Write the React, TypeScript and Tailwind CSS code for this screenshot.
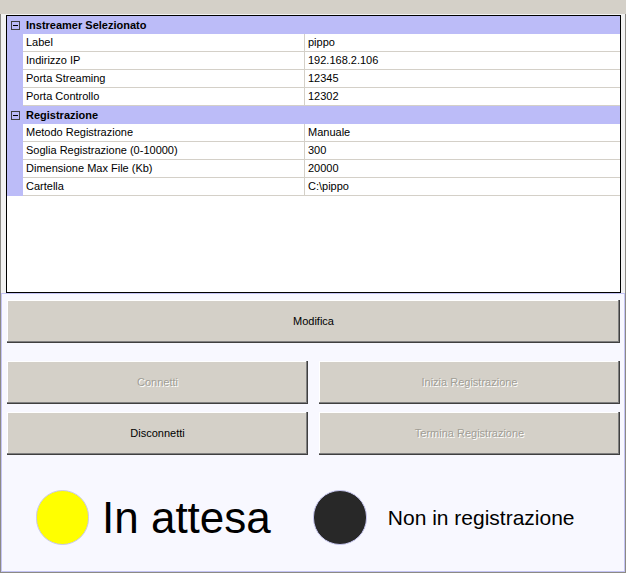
import React from "react";

const cats: { title: string; rows: [string, string][] }[] = [
  {
    title: "Instreamer Selezionato",
    rows: [
      ["Label", "pippo"],
      ["Indirizzo IP", "192.168.2.106"],
      ["Porta Streaming", "12345"],
      ["Porta Controllo", "12302"],
    ],
  },
  {
    title: "Registrazione",
    rows: [
      ["Metodo Registrazione", "Manuale"],
      ["Soglia Registrazione (0-10000)", "300"],
      ["Dimensione Max File (Kb)", "20000"],
      ["Cartella", "C:\\pippo"],
    ],
  },
];

function Minus() {
  return (
    <div className="w-[9px] h-[9px] border border-[#404040] bg-transparent flex items-center justify-center">
      <div className="w-[5px] h-px bg-black" />
    </div>
  );
}

function Btn({ label, disabled, className }: { label: string; disabled?: boolean; className?: string }) {
  return (
    <div
      className={
        "h-[43px] bg-[#d4d0c8] flex items-center justify-center text-[11px] shadow-[inset_-1px_-1px_0_#404040,inset_-2px_-2px_0_#808080,inset_1px_1px_0_#ffffff] " +
        (disabled ? "text-[#a19e96] [text-shadow:1px_1px_0_#ffffff] " : "text-black ") +
        (className ?? "")
      }
    >
      {label}
    </div>
  );
}

export default function App() {
  return (
    <div className="w-[626px] h-[573px] bg-[#d4d0c8] flex flex-col font-['Liberation_Sans',Arial,sans-serif]">
      <div className="h-[14px] shrink-0" />
      <div className="flex-1 flex flex-col border-l border-r border-b border-[#8c8a85]">
        <div className="h-[279px] bg-[#f2f2f2] pl-[5px] pr-[4px] pt-px">
          <div className="h-[278px] border border-black bg-white flex flex-col">
            {cats.map((c) => (
              <div key={c.title} className="flex flex-col">
                <div className="h-[18px] bg-[#bcbcf8] flex items-center">
                  <div className="w-[16px] flex justify-center pl-px">
                    <Minus />
                  </div>
                  <div className="pl-[3px] text-[11px] font-bold text-black leading-none">{c.title}</div>
                </div>
                {c.rows.map(([k, v]) => (
                  <div key={k} className="h-[18px] flex">
                    <div className="w-[16px] bg-[#bcbcf8] shrink-0" />
                    <div className="w-[282px] shrink-0 border-b border-r border-[#d4d0c8] pl-[3px] flex items-center text-[11px] text-black">
                      {k}
                    </div>
                    <div className="flex-1 border-b border-[#d4d0c8] pl-[3px] flex items-center text-[11px] text-black">
                      {v}
                    </div>
                  </div>
                ))}
              </div>
            ))}
          </div>
        </div>
        <div className="flex-1 border border-[#c4c4f4] bg-[#f8f8ff] pl-[5px] pr-[4px] pt-[6px] flex flex-col">
          <Btn label="Modifica" />
          <div className="mt-[18px] grid grid-cols-2 gap-x-[11px] gap-y-[8px]">
            <Btn label="Connetti" disabled />
            <Btn label="Inizia Registrazione" disabled />
            <Btn label="Disconnetti" />
            <Btn label="Termina Registrazione" disabled />
          </div>
          <div className="flex items-center mt-[35px]">
            <div className="ml-[29px] w-[53px] h-[55px] rounded-full bg-[#ffff00] border border-[#c8c8f0]" />
            <div className="ml-[13px] text-[44px] leading-none text-black">In attesa</div>
            <div className="ml-[42px] w-[54px] h-[55px] rounded-full bg-[#282828] border border-[#c8c8f0]" />
            <div className="ml-[21px] text-[21px] leading-none text-black">Non in registrazione</div>
          </div>
        </div>
      </div>
    </div>
  );
}
